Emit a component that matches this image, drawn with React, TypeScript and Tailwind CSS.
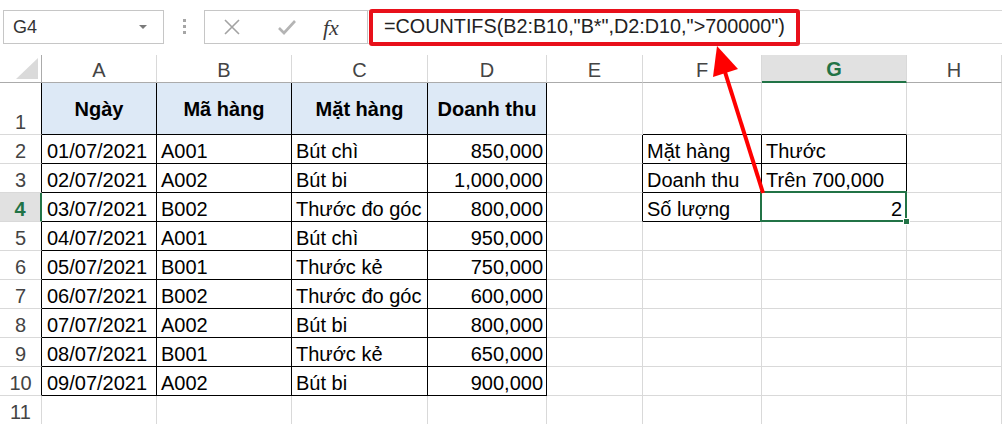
import type { ReactNode } from "react";

const FONT = "font-['Liberation_Sans','Arial',sans-serif]";

type Row = {
  date: string;
  code: string;
  item: string;
  revenue: string;
  f?: string;
  g?: string;
};

const rows: Row[] = [
  { date: "01/07/2021", code: "A001", item: "Bút chì", revenue: "850,000", f: "Mặt hàng", g: "Thước" },
  { date: "02/07/2021", code: "A002", item: "Bút bi", revenue: "1,000,000", f: "Doanh thu", g: "Trên 700,000" },
  { date: "03/07/2021", code: "B002", item: "Thước đo góc", revenue: "800,000", f: "Số lượng", g: "2" },
  { date: "04/07/2021", code: "A001", item: "Bút chì", revenue: "950,000" },
  { date: "05/07/2021", code: "B001", item: "Thước kẻ", revenue: "750,000" },
  { date: "06/07/2021", code: "B002", item: "Thước đo góc", revenue: "600,000" },
  { date: "07/07/2021", code: "A002", item: "Bút bi", revenue: "800,000" },
  { date: "08/07/2021", code: "B001", item: "Thước kẻ", revenue: "650,000" },
  { date: "09/07/2021", code: "A002", item: "Bút bi", revenue: "900,000" },
];

const columns = ["A", "B", "C", "D", "E", "F", "G", "H"];

function Cell({ className = "", children }: { className?: string; children?: ReactNode }) {
  return (
    <div className={`flex items-end overflow-visible whitespace-nowrap border-r border-b leading-[24px] ${className}`}>
      {children}
    </div>
  );
}

function FormulaBar() {
  return (
    <div className="flex h-[55px] items-start pt-[10px]">
      <div className="ml-[3px] flex h-[34px] w-[161px] items-center justify-between border border-[#c6c6c6] pl-[9px] pr-[16px]">
        <span className="text-[18px] text-[#333]">G4</span>
        <span className="h-0 w-0 border-x-[4px] border-t-[4px] border-x-transparent border-t-[#7a7a7a]" />
      </div>
      <div className="flex w-[40px] flex-col items-center gap-[3px] pt-[9px]">
        <span className="h-[3px] w-[3px] bg-[#a6a6a6]" />
        <span className="h-[3px] w-[3px] bg-[#a6a6a6]" />
        <span className="h-[3px] w-[3px] bg-[#a6a6a6]" />
      </div>
      <div className="flex h-[34px] w-[164px] items-center border border-[#c6c6c6]">
        <svg width="18" height="18" viewBox="0 0 18 18" className="ml-[18px]">
          <path d="M2 2 L16 16 M16 2 L2 16" stroke="#a3a3a3" strokeWidth="1.6" fill="none" />
        </svg>
        <svg width="20" height="18" viewBox="0 0 20 18" className="ml-[36px]">
          <path d="M2 10 L7 15 L18 3" stroke="#b4b4b4" strokeWidth="2.6" fill="none" />
        </svg>
        <span className="ml-[26px] font-['Liberation_Serif','Times_New_Roman',serif] text-[22px] italic text-[#3a3a3a]">fx</span>
      </div>
      <div className="flex h-[34px] flex-1 items-center border-y border-[#d6d6d6] pl-[1px]">
        <div className="-my-[2px] flex h-[37px] w-[431px] items-center rounded-[3px] border-[4px] border-[#e8101a] pl-[11px]">
          <span className="text-[19.8px] text-[#222]">=COUNTIFS(B2:B10,"B*",D2:D10,"&gt;700000")</span>
        </div>
      </div>
    </div>
  );
}

export default function App() {
  const gridBorder = "border-[#d9d9d9]";

  return (
    <div className={`relative h-[424px] w-[1002px] overflow-hidden bg-white ${FONT}`}>
      <FormulaBar />

      <div className="grid grid-cols-[42px_115px_135px_136px_119px_96px_119px_145px_1fr] grid-rows-[28px_52px_repeat(11,29px)] text-[20px] text-black">
        {/* column headers */}
        <div className="relative border-r border-b border-[#ababab]">
          <svg width="22" height="21" viewBox="0 0 22 21" className="absolute bottom-[3px] right-[3px]">
            <polygon points="22,0 22,21 0,21" fill="#dadada" />
          </svg>
        </div>
        {columns.map((col) =>
          col === "G" ? (
            <div key={col} className="flex items-end justify-center border-r border-b-2 border-r-[#d9d9d9] border-b-[#217346] bg-[#e1e1e1] leading-[24px] font-bold text-[#217346]">
              {col}
            </div>
          ) : (
            <div key={col} className="flex items-end justify-center border-r border-b border-r-[#d9d9d9] border-b-[#ababab] leading-[24px] text-[#444]">
              {col}
            </div>
          ),
        )}

        {/* row 1: table header */}
        <div className="flex items-end justify-center border-r border-b border-r-black border-b-[#d9d9d9] leading-[24px] text-[#444]">1</div>
        {["Ngày", "Mã hàng", "Mặt hàng", "Doanh thu"].map((h) => (
          <div key={h} className="flex items-center justify-center border-r border-b border-black bg-[#dde9f6] font-bold">
            {h}
          </div>
        ))}
        <Cell className={gridBorder} />
        <Cell className="border-r-[#d9d9d9] border-b-black" />
        <Cell className="border-r-[#d9d9d9] border-b-black" />
        <Cell className={gridBorder} />

        {/* data rows */}
        {rows.map((r, i) => {
          const n = i + 2;
          const selected = n === 4;
          const inLookup = n <= 4;
          return [
            <div
              key={`h${n}`}
              className={
                selected
                  ? "flex items-end justify-center border-r-2 border-b border-r-[#217346] border-b-[#d9d9d9] bg-[#e1e1e1] leading-[24px] font-bold text-[#217346]"
                  : "flex items-end justify-center border-r border-b border-r-black border-b-[#d9d9d9] leading-[24px] text-[#444]"
              }
            >
              {n}
            </div>,
            <Cell key={`a${n}`} className="border-black pl-[5px]">{r.date}</Cell>,
            <Cell key={`b${n}`} className="border-black pl-[4px]">{r.code}</Cell>,
            <Cell key={`c${n}`} className="border-black pl-[4px]">{r.item}</Cell>,
            <Cell key={`d${n}`} className="justify-end border-black pr-[3px]">{r.revenue}</Cell>,
            <Cell key={`e${n}`} className={inLookup ? "border-r-black border-b-[#d9d9d9]" : gridBorder} />,
            <Cell key={`f${n}`} className={inLookup ? "border-black pl-[4px]" : gridBorder}>{r.f}</Cell>,
            <Cell key={`g${n}`} className={inLookup ? `relative border-black ${selected ? "justify-end pr-[4px]" : "pl-[4px]"}` : gridBorder}>
              {r.g}
              {selected ? (
                <span className="absolute -left-[2px] -top-[2px] bottom-[-1px] right-[-1px] z-10 border-2 border-[#217346]">
                  <span className="absolute bottom-[-5px] right-[-5px] h-[7px] w-[7px] border border-white bg-[#217346]" />
                </span>
              ) : null}
            </Cell>,
            <Cell key={`x${n}`} className={gridBorder} />,
          ];
        })}

        {/* row 11 */}
        <div className="flex items-end justify-center border-r border-b border-[#d9d9d9] leading-[24px] text-[#444]">11</div>
        {columns.map((col) => (
          <Cell key={`r11${col}`} className={gridBorder} />
        ))}
      </div>

      <svg width="1002" height="424" viewBox="0 0 1002 424" className="pointer-events-none absolute left-0 top-0 z-20">
        <line x1="763" y1="193" x2="725" y2="72" stroke="#ff0000" strokeWidth="4" />
        <polygon points="717,46 738,69 713,77" fill="#ff0000" />
      </svg>
    </div>
  );
}
